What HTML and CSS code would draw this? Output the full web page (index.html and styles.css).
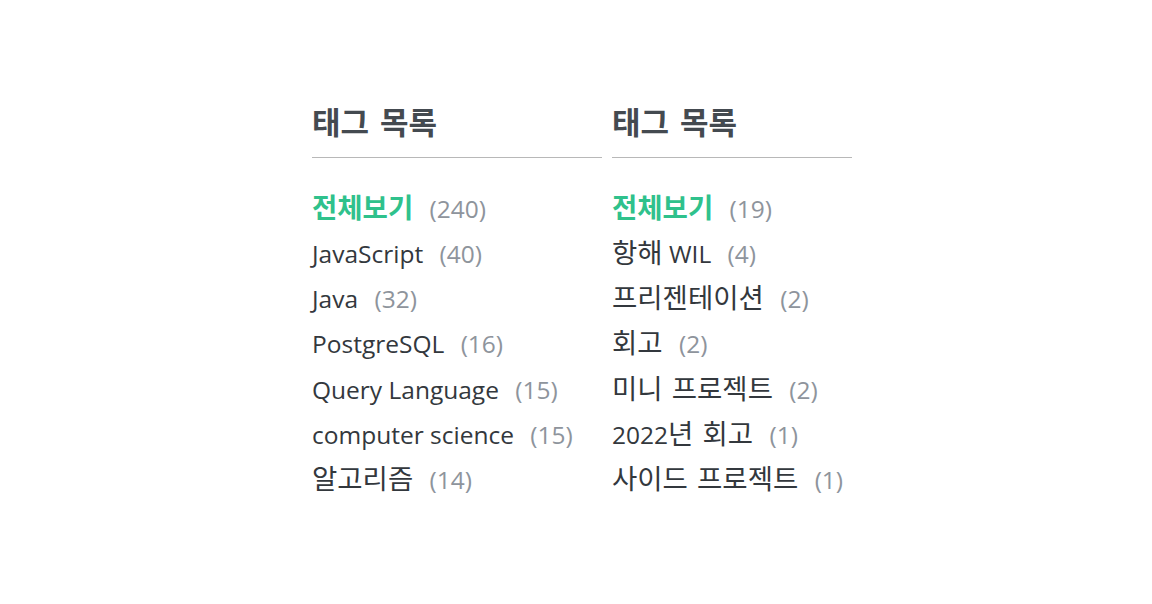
FILE: index.html
```html
<!DOCTYPE html>
<html>
<head>
    <meta charset="utf-8">
    <title>태그 목록</title>
    <link rel="stylesheet" href="styles.css">
</head>
<body>
    <div class="tag-wrap">
        <div class="tag-box wide">
            <h2 class="tag-title">태그 목록</h2>
            <ul class="tag-list">
                <li class="active"><a href="#"><span class="ko">전체보기</span></a> <span class="count">(240)</span></li>
                <li><a href="#">JavaScript</a> <span class="count">(40)</span></li>
                <li><a href="#">Java</a> <span class="count">(32)</span></li>
                <li><a href="#">PostgreSQL</a> <span class="count">(16)</span></li>
                <li><a href="#">Query Language</a> <span class="count">(15)</span></li>
                <li><a href="#">computer science</a> <span class="count">(15)</span></li>
                <li><a href="#"><span class="ko">알고리즘</span></a> <span class="count">(14)</span></li>
            </ul>
        </div>
        <div class="tag-box">
            <h2 class="tag-title">태그 목록</h2>
            <ul class="tag-list">
                <li class="active"><a href="#"><span class="ko">전체보기</span></a> <span class="count">(19)</span></li>
                <li><a href="#"><span class="ko">항해</span> WIL</a> <span class="count">(4)</span></li>
                <li><a href="#"><span class="ko">프리젠테이션</span></a> <span class="count">(2)</span></li>
                <li><a href="#"><span class="ko">회고</span></a> <span class="count">(2)</span></li>
                <li><a href="#"><span class="ko">미니 프로젝트</span></a> <span class="count">(2)</span></li>
                <li><a href="#">2022<span class="ko">년 회고</span></a> <span class="count">(1)</span></li>
                <li><a href="#"><span class="ko">사이드 프로젝트</span></a> <span class="count">(1)</span></li>
            </ul>
        </div>
    </div>
</body>
</html>
```

FILE: styles.css
```css
:root {
    --text-color: #33383d;
    --count-color: #8e949c;
    --accent-color: #2fc18c;
    --line-color: #b8b8b8;
}

* {
    margin: 0;
    padding: 0;
    box-sizing: border-box;
}

body {
    font-family: 'Open Sans', 'Noto Sans CJK KR', sans-serif;
    background: white;
    color: var(--text-color);
}

.tag-wrap {
    display: flex;
    gap: 10px;
    padding: 101px 0 0 312px;
}

.tag-box {
    width: 240px;
}

.tag-box.wide {
    width: 290px;
}

.tag-title {
    font-family: 'Noto Sans CJK KR', sans-serif;
    font-size: 31px;
    line-height: 40px;
    font-weight: 700;
    word-spacing: 4px;
    color: #444a50;
    padding-bottom: 16px;
    border-bottom: 1px solid var(--line-color);
}

.tag-list {
    list-style: none;
    margin-top: 27.5px;
}

.tag-list li {
    font-size: 24.5px;
    line-height: 45.3px;
    white-space: nowrap;
}

/* korean glyphs run wider in the original font */
.tag-list .ko {
    font-family: 'Noto Sans CJK KR', sans-serif;
    font-size: 27.5px;
    line-height: 1;
    word-spacing: 3px;
}

.tag-list a {
    color: var(--text-color);
    text-decoration: none;
}

.tag-list .count {
    color: var(--count-color);
    margin-left: 10px;
}

.tag-list li.active a {
    color: var(--accent-color);
    font-weight: 700;
}
```
